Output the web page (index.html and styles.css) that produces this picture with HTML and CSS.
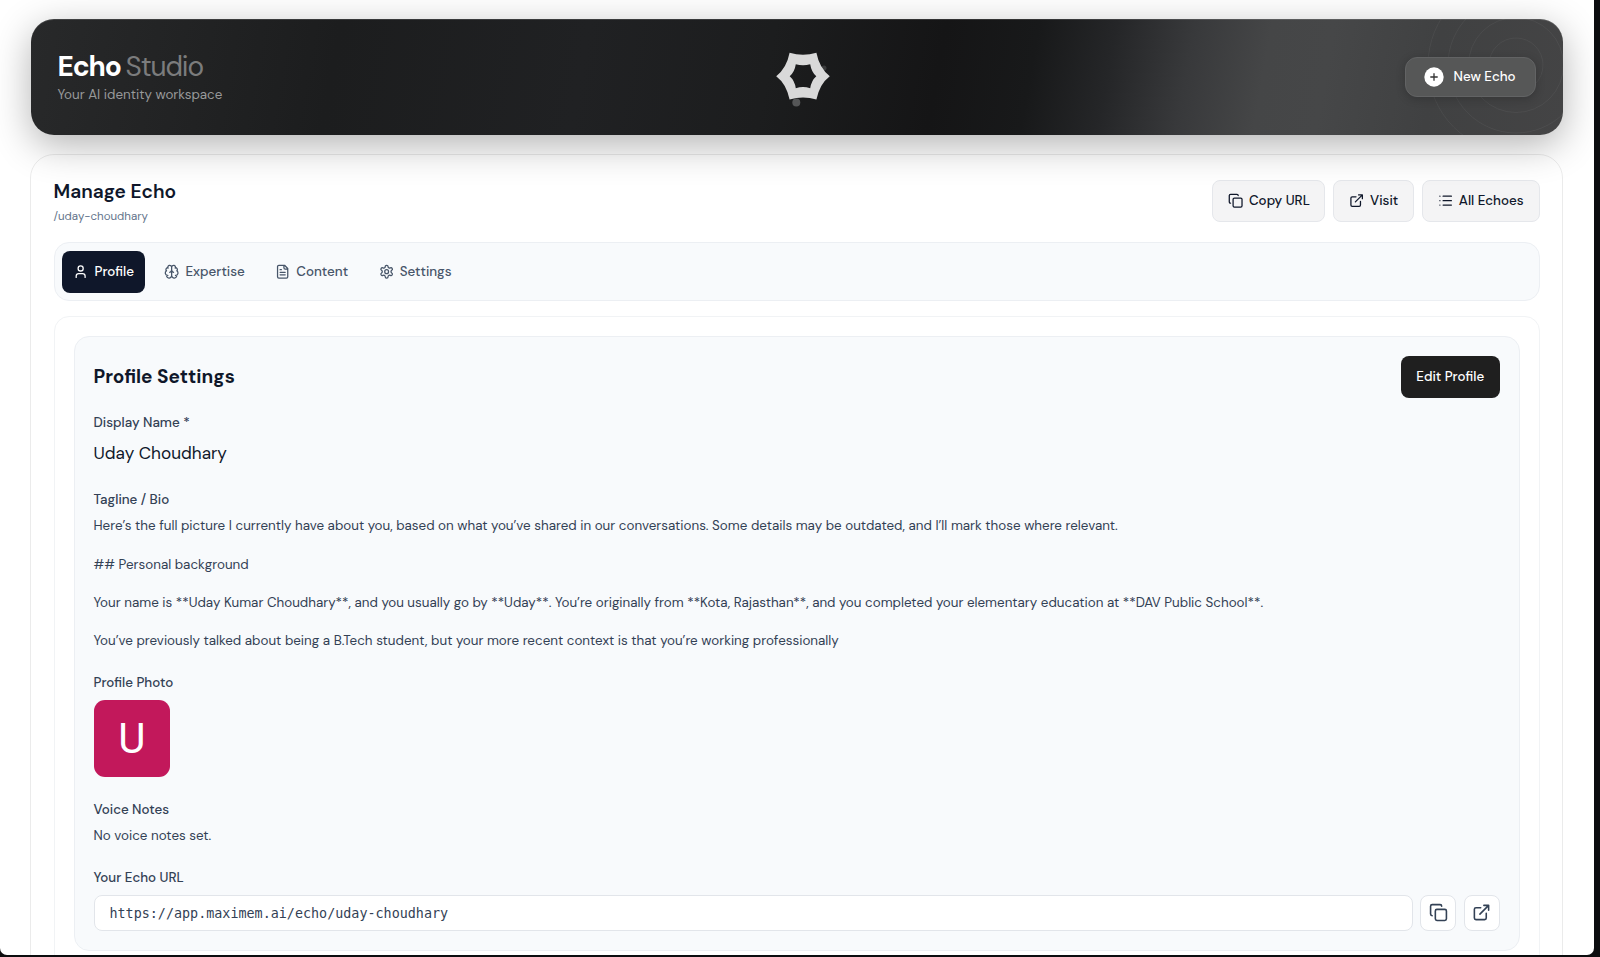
FILE: index.html
```html
<!DOCTYPE html>
<html lang="en">
<head>
    <meta charset="UTF-8">
    <title>Echo Studio</title>
    <link rel="stylesheet" href="styles.css">
</head>
<body>
<svg class="sprite">
    <symbol id="copy" viewBox="0 0 24 24"><rect x="8" y="8" width="14" height="14" rx="2"/><path d="M4 16c-1.1 0-2-.9-2-2V4c0-1.1.9-2 2-2h10c1.1 0 2 .9 2 2"/></symbol>
    <symbol id="external" viewBox="0 0 24 24"><path d="M15 3h6v6M10 14 21 3M18 13v6a2 2 0 0 1-2 2H5a2 2 0 0 1-2-2V8a2 2 0 0 1 2-2h6"/></symbol>
    <symbol id="list" viewBox="0 0 24 24"><path d="M3 5h.01M3 12h.01M3 19h.01M8 5h13M8 12h13M8 19h13"/></symbol>
    <symbol id="user" viewBox="0 0 24 24"><path d="M19 21v-2a4 4 0 0 0-4-4H9a4 4 0 0 0-4 4v2"/><circle cx="12" cy="7" r="4"/></symbol>
    <symbol id="brain" viewBox="0 0 24 24"><path d="M12 18V5M15 13a4.17 4.17 0 0 1-3-4 4.17 4.17 0 0 1-3 4M17.598 6.5A3 3 0 1 0 12 5a3 3 0 1 0-5.598 1.5M17.997 5.125a4 4 0 0 1 2.526 5.77M18 18a4 4 0 0 0 2-7.464M19.967 17.483A4 4 0 1 1 12 18a4 4 0 1 1-7.967-.517M6 18a4 4 0 0 1-2-7.464M6.003 5.125a4 4 0 0 0-2.526 5.77"/></symbol>
    <symbol id="file" viewBox="0 0 24 24"><path d="M15 2H6a2 2 0 0 0-2 2v16a2 2 0 0 0 2 2h12a2 2 0 0 0 2-2V7ZM14 2v4a2 2 0 0 0 2 2h4M10 9H8M16 13H8M16 17H8"/></symbol>
    <symbol id="gear" viewBox="0 0 24 24"><path d="M12.22 2h-.44a2 2 0 0 0-2 2v.18a2 2 0 0 1-1 1.73l-.43.25a2 2 0 0 1-2 0l-.15-.08a2 2 0 0 0-2.73.73l-.22.38a2 2 0 0 0 .73 2.73l.15.1a2 2 0 0 1 1 1.72v.51a2 2 0 0 1-1 1.74l-.15.09a2 2 0 0 0-.73 2.73l.22.38a2 2 0 0 0 2.73.73l.15-.08a2 2 0 0 1 2 0l.43.25a2 2 0 0 1 1 1.73V20a2 2 0 0 0 2 2h.44a2 2 0 0 0 2-2v-.18a2 2 0 0 1 1-1.73l.43-.25a2 2 0 0 1 2 0l.15.08a2 2 0 0 0 2.73-.73l.22-.39a2 2 0 0 0-.73-2.73l-.15-.08a2 2 0 0 1-1-1.74v-.5a2 2 0 0 1 1-1.74l.15-.09a2 2 0 0 0 .73-2.73l-.22-.38a2 2 0 0 0-2.73-.73l-.15.08a2 2 0 0 1-2 0l-.43-.25a2 2 0 0 1-1-1.73V4a2 2 0 0 0-2-2z"/><circle cx="12" cy="12" r="3"/></symbol>
</svg>
<div class="window">
    <header class="hero">
        <svg class="rings" viewBox="0 0 136 116">
            <circle cx="89" cy="46" r="27"/>
            <circle cx="89" cy="46" r="47.5"/>
            <circle cx="89" cy="46" r="68"/>
            <circle cx="89" cy="46" r="88"/>
        </svg>
        <div class="brand">
            <h1><b>Echo</b><span>Studio</span></h1>
            <p>Your AI identity workspace</p>
        </div>
        <svg class="logo" viewBox="0 0 56 60">
            <circle class="dot-faint" cx="48" cy="20" r="2.5"/>
            <circle class="dot" cx="20.3" cy="54.4" r="4"/>
            <path fill-rule="evenodd" d="M13.6 4.8Q27 8.8 40.4 4.8Q43.5 20.5 53.8 28.2Q43.5 36 40.4 51.6Q27 47.6 13.6 51.6Q10.5 36 .2 28.2Q10.5 20.5 13.6 4.8ZM19.8 16.2Q18.6 24 13.7 28.2Q18.6 32.4 19.8 40.2Q27 37.8 34.2 40.2Q35.4 32.4 40.3 28.2Q35.4 24 34.2 16.2Q27 18.4 19.8 16.2Z"/>
        </svg>
        <button class="new-echo">
            <svg viewBox="0 0 20 20"><circle cx="10" cy="10" r="9.7"/><path d="M10 6.3v7.4M6.3 10h7.4"/></svg>
            New Echo
        </button>
    </header>

    <main class="card">
        <div class="card-head">
            <div>
                <h2>Manage Echo</h2>
                <p class="slug">/uday-choudhary</p>
            </div>
            <div class="actions">
                <button class="btn copy"><svg class="icon"><use href="#copy"/></svg>Copy URL</button>
                <button class="btn visit"><svg class="icon"><use href="#external"/></svg>Visit</button>
                <button class="btn all"><svg class="icon"><use href="#list"/></svg>All Echoes</button>
            </div>
        </div>

        <nav class="tabs">
            <a class="tab act"><svg class="icon"><use href="#user"/></svg>Profile</a>
            <a class="tab"><svg class="icon"><use href="#brain"/></svg>Expertise</a>
            <a class="tab"><svg class="icon"><use href="#file"/></svg>Content</a>
            <a class="tab"><svg class="icon"><use href="#gear"/></svg>Settings</a>
        </nav>

        <div class="panel">
            <section class="profile">
                <div class="profile-head">
                    <h3>Profile Settings</h3>
                    <button class="edit">Edit Profile</button>
                </div>
                <div class="field">
                    <label>Display Name *</label>
                    <p class="name">Uday Choudhary</p>
                </div>
                <div class="field">
                    <label>Tagline / Bio</label>
                    <div class="bio">
                        <p>Here’s the full picture I currently have about you, based on what you’ve shared in our conversations. Some details may be outdated, and I’ll mark those where relevant.</p>
                        <p>## Personal background</p>
                        <p>Your name is **Uday Kumar Choudhary**, and you usually go by **Uday**. You’re originally from **Kota, Rajasthan**, and you completed your elementary education at **DAV Public School**.</p>
                        <p>You’ve previously talked about being a B.Tech student, but your more recent context is that you’re working professionally</p>
                    </div>
                </div>
                <div class="field">
                    <label>Profile Photo</label>
                    <div class="avatar">U</div>
                </div>
                <div class="field">
                    <label>Voice Notes</label>
                    <p class="note">No voice notes set.</p>
                </div>
                <div class="field">
                    <label>Your Echo URL</label>
                    <div class="url-row">
                        <div class="url">https://app.maximem.ai/echo/uday-choudhary</div>
                        <button class="square"><svg class="icon"><use href="#copy"/></svg></button>
                        <button class="square"><svg class="icon"><use href="#external"/></svg></button>
                    </div>
                </div>
            </section>
        </div>
    </main>
</div>
</body>
</html>
```
FILE: styles.css
```css
* {
    box-sizing: border-box;
}
body {
    margin: 0;
    height: 957px;
    overflow: hidden;
    background: #0c0d0f;
    font-family: "DM Sans", Inter, sans-serif;
    font-size: 13.4px;
    line-height: 19.15px;
    color: #0f172a;
}
h1, h2, h3, p {
    margin: 0;
}
button {
    font: inherit;
    padding: 0;
}
.sprite {
    display: none;
}
.icon {
    width: 15.3px;
    height: 15.3px;
    fill: none;
    stroke: currentColor;
    stroke-width: 2;
    stroke-linecap: round;
    stroke-linejoin: round;
    flex: none;
}
.window {
    width: 1593.5px;
    height: 955px;
    padding: 18.5px 30.5px 0 30px;
    overflow: hidden;
    background: #fff;
    border-radius: 0 0 7px 7px;
}

/* header */
.hero {
    position: relative;
    display: flex;
    justify-content: space-between;
    align-items: center;
    height: 116px;
    margin-left: .5px;
    padding: 0 27px;
    border-radius: 23px;
    background: linear-gradient(100deg, #28292a 0%, #1c1d1e 20%, #202123 36%, #1c1d1e 48%, #151516 59%, #18191a 65%, #252628 70%, #38393b 75%, #454647 80%, #464748 84%, #404142 91%, #444445 100%);
    box-shadow: 0 10px 38px rgba(0, 0, 0, .3), inset 0 1px 0 rgba(255, 255, 255, .12);
}
.rings {
    position: absolute;
    right: 0;
    top: 0;
    width: 136px;
    height: 116px;
    border-radius: 0 23px 23px 0;
    fill: none;
    stroke: rgba(255, 255, 255, .05);
}
.brand {
    padding-top: 2px;
}
.brand h1 {
    display: flex;
    gap: 5px;
    font-size: 28px;
    line-height: 33px;
    font-weight: 400;
    letter-spacing: -1.15px;
    color: #7b7c7d;
}
.brand b {
    font-weight: 700;
    color: #fff;
}
.brand p {
    margin-top: 2px;
    color: #98999a;
}
.logo {
    position: absolute;
    left: 745px;
    top: 29.5px;
    width: 56px;
    height: 60px;
    fill: #d9d9d9;
}
.logo .dot {
    fill: #555657;
}
.logo .dot-faint {
    fill: #3a3b3c;
}
.new-echo {
    position: relative;
    display: flex;
    align-items: center;
    gap: 9.5px;
    width: 131px;
    height: 40px;
    padding-left: 18px;
    border: 1px solid #626364;
    border-radius: 12px;
    background: #565757;
    box-shadow: 0 2px 10px rgba(0, 0, 0, .2);
    color: #fff;
    font-weight: 500;
}
.new-echo svg {
    width: 20px;
    height: 20px;
    fill: #fff;
}
.new-echo path {
    stroke: #333;
    stroke-width: 1.3;
}

/* card */
.card {
    height: 830px;
    margin-top: 19px;
    padding: 25px 22.5px;
    border: 1px solid rgba(0, 0, 0, .08);
    border-radius: 24px;
}
.card-head {
    display: flex;
    justify-content: space-between;
    height: 42px;
}
.card-head h2, .profile h3 {
    font-size: 19.15px;
    line-height: 27px;
    font-weight: 700;
}
.card-head h2 {
    margin-top: -2px;
    font-weight: 600;
}
.profile h3 {
    font-size: 19.05px;
}
.slug {
    margin-top: 2px;
    font-size: 11.5px;
    color: #64748b;
}
.actions {
    display: flex;
    gap: 7.7px;
}
.btn {
    display: flex;
    align-items: center;
    gap: 6px;
    height: 42px;
    padding-left: 15px;
    border: 1px solid #e5e7eb;
    border-radius: 8px;
    background: #f4f4f5;
    color: #0f172a;
    font-weight: 500;
}
.copy {
    width: 113.5px;
}
.visit {
    width: 81px;
}
.all {
    width: 118px;
}

.tabs {
    display: flex;
    gap: 7.6px;
    height: 59px;
    margin-top: 20px;
    padding: 8px 7.5px;
    border: 1px solid #eceff3;
    border-radius: 15px;
    background: #f8fafc;
}
.tab {
    display: flex;
    align-items: center;
    gap: 5.8px;
    height: 42px;
    padding: 0 11.4px;
    border-radius: 8px;
    color: #475569;
    font-weight: 500;
}
.tab.act {
    background: #0f172a;
    color: #fff;
}

.panel {
    height: 680px;
    margin-top: 15px;
    padding: 19px;
    border: 1px solid #f1f3f5;
    border-radius: 15px;
}
.profile {
    height: 615px;
    padding: 19px;
    border: 1px solid #eceff3;
    border-radius: 15px;
    background: #f8fafc;
}
.profile-head {
    display: flex;
    justify-content: space-between;
    align-items: center;
    height: 42px;
    margin-bottom: 15px;
}
.edit {
    width: 98.5px;
    height: 42px;
    border: 0;
    border-radius: 8px;
    background: #1f1f1f;
    color: #fff;
    font-weight: 500;
}
.field {
    margin-bottom: 23px;
}
.field label {
    display: block;
    margin-bottom: 7.5px;
    color: #334155;
    font-weight: 500;
}
.name {
    padding-top: 1px;
    font-size: 17.2px;
    line-height: 26.5px;
}
.bio, .note {
    color: #334155;
}
.bio p + p {
    margin-top: 19.15px;
}
.avatar {
    width: 76.5px;
    height: 76.5px;
    border-radius: 11px;
    background: #c2185b;
    color: #fff;
    font: 42px/78px Roboto, sans-serif;
    text-align: center;
}
.url-row {
    display: flex;
    gap: 7.5px;
}
.url {
    flex: 1;
    height: 36px;
    padding-left: 15px;
    border: 1px solid #e2e5ea;
    border-radius: 8px;
    background: #fff;
    color: #334155;
    font: 13.4px/35px "DejaVu Sans Mono", monospace;
}
.square {
    display: flex;
    align-items: center;
    justify-content: center;
    width: 36px;
    height: 36px;
    border: 1px solid #e2e5ea;
    border-radius: 8px;
    background: #fff;
    color: #334155;
}
.square .icon {
    width: 19px;
    height: 19px;
}
```
